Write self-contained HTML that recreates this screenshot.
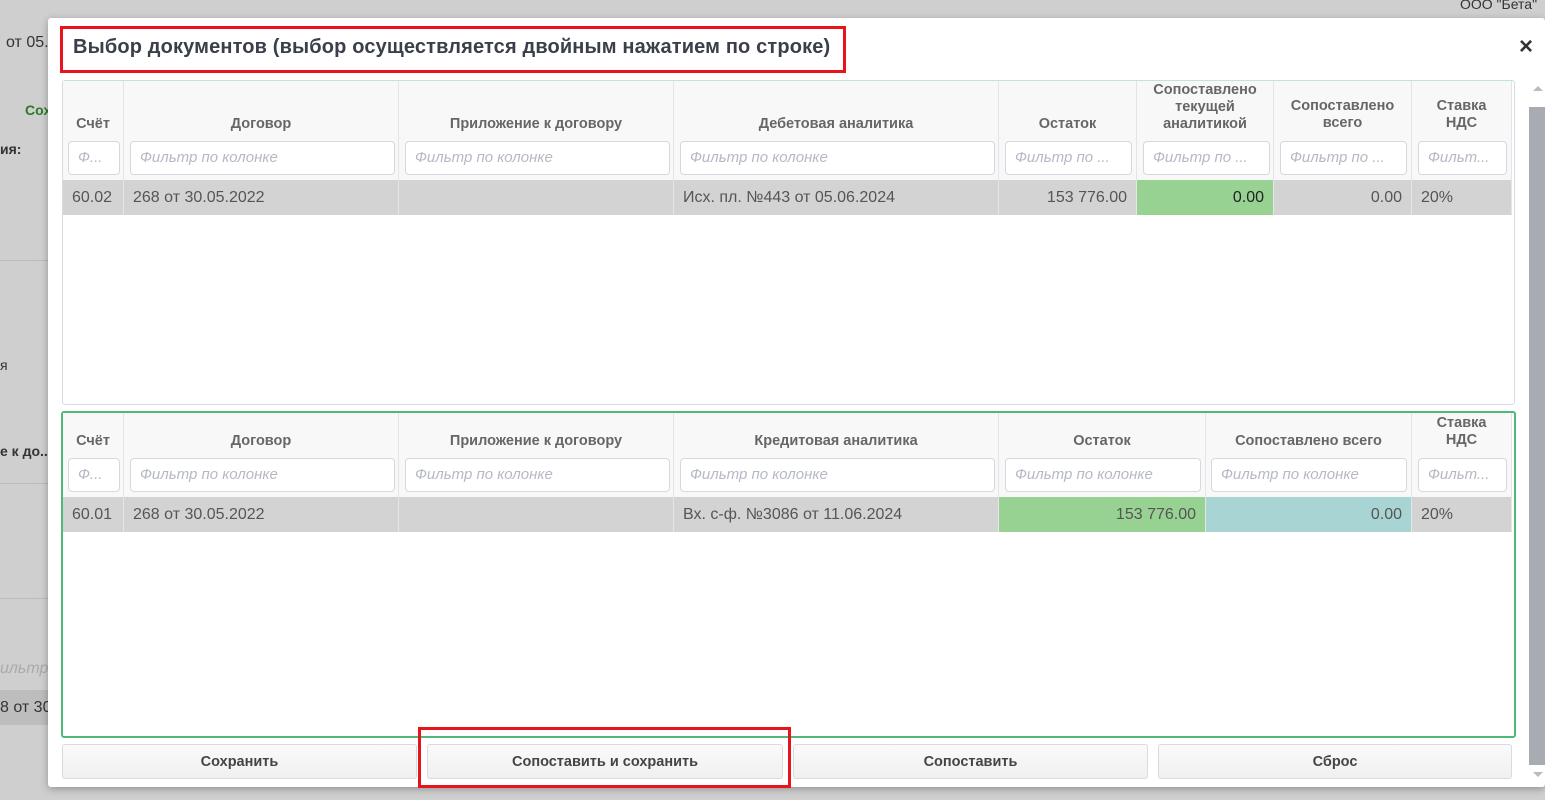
<!DOCTYPE html>
<html><head><meta charset="utf-8"><style>
*{box-sizing:border-box;margin:0;padding:0}
body{width:1545px;height:800px;overflow:hidden;background:#cfcfcf;font-family:"Liberation Sans","DejaVu Sans",sans-serif;position:relative}
.a{position:absolute}
.bgt{color:#333;font-size:14px}
.modal{left:48px;top:18px;width:1497px;height:769px;background:#fff;box-shadow:0 2px 8px rgba(0,0,0,.3);border-radius:3px}
.tbl{position:absolute;border:1px solid #d8dbe3;border-radius:3px;background:#fff}
.hd{position:absolute;background:#f8f8f9;border-right:1px solid #e3e4e8;color:#666;font-size:14.5px;font-weight:bold;text-align:center;display:flex;align-items:flex-start;justify-content:center;line-height:17px}
.f{position:absolute;border:1px solid #d6d8e0;border-radius:4px;background:#fff;color:#b5b9c4;font-style:italic;font-size:15px;padding:7px 9px;white-space:nowrap;overflow:hidden;text-overflow:ellipsis;height:34px}
.c{position:absolute;background:#d3d3d3;border-right:1px solid #e6e6e6;color:#555;font-size:16px;line-height:35px;height:35px;padding:0 9px;white-space:nowrap}
.r{text-align:right}
.btn{position:absolute;top:744px;height:35px;border:1px solid #d8dbe3;border-radius:3px;background:linear-gradient(#fafafa,#f0f0f0);font-size:14.5px;font-weight:bold;color:#444;text-align:center;line-height:34px}
.red{position:absolute;border:3px solid #e8141c}
</style></head><body>
<div class="a bgt" style="left:6px;top:34px;font-size:16px">от 05.</div>
<div class="a" style="left:25px;top:102px;font-size:14px;color:#2a7a2a;font-weight:bold">Сох</div>
<div class="a bgt" style="left:0;top:141px;font-weight:bold">ия:</div>
<div class="a bgt" style="left:0;top:357px">я</div>
<div class="a bgt" style="left:0;top:443px;font-weight:bold;white-space:nowrap">е к до...</div>
<div class="a" style="left:0;top:660px;font-style:italic;color:#aaa;font-size:16px">ильтр</div>
<div class="a" style="left:0;top:690px;width:48px;height:35px;background:#bdbdbd;font-size:16px;line-height:35px;color:#333;white-space:nowrap;overflow:hidden">8 от 30</div>
<div class="a" style="left:0;top:260px;width:48px;height:1px;background:#bbb"></div>
<div class="a" style="left:0;top:483px;width:48px;height:1px;background:#bbb"></div>
<div class="a" style="left:0;top:598px;width:48px;height:1px;background:#bbb"></div>
<div class="a" style="left:1460px;top:-4px;font-size:14px;color:#333">ООО "Бета"</div>

<div class="a modal"></div>
<div class="a" style="left:73px;top:36px;font-size:20px;font-weight:bold;color:#3a3f4a;letter-spacing:0.15px">Выбор документов (выбор осуществляется двойным нажатием по строке)</div>
<div class="red" style="left:60px;top:26px;width:786px;height:47px"></div>
<div class="a" style="left:1519px;top:33px;font-size:24px;font-weight:bold;color:#333">×</div>
<div class="a" style="left:1529px;top:107px;width:16px;height:658px;background:#a9abb2"></div>
<div class="a" style="left:1533px;top:86px;width:0;height:0;border:5px solid transparent;border-bottom-color:#bbb;border-top:0"></div>
<div class="a" style="left:1533px;top:772px;width:0;height:0;border:5px solid transparent;border-top-color:#bbb;border-bottom:0"></div>

<!-- top table -->
<div class="tbl" style="left:62px;top:80px;width:1453px;height:325px;border-top-color:#bfe6d0"></div>
<div class="hd" style="left:63px;top:81px;width:61px;height:99px;padding-top:35px">Счёт</div>
<div class="hd" style="left:124px;top:81px;width:275px;height:99px;padding-top:35px">Договор</div>
<div class="hd" style="left:399px;top:81px;width:275px;height:99px;padding-top:35px">Приложение к договору</div>
<div class="hd" style="left:674px;top:81px;width:325px;height:99px;padding-top:35px">Дебетовая аналитика</div>
<div class="hd" style="left:999px;top:81px;width:138px;height:99px;padding-top:35px">Остаток</div>
<div class="hd" style="left:1137px;top:81px;width:137px;height:99px;padding-top:1px">Сопоставлено<br>текущей<br>аналитикой</div>
<div class="hd" style="left:1274px;top:81px;width:138px;height:99px;padding-top:17px">Сопоставлено<br>всего</div>
<div class="hd" style="left:1412px;top:81px;width:100px;height:99px;padding-top:17px">Ставка<br>НДС</div>
<div class="f" style="left:68px;top:141px;width:52px">Ф...</div>
<div class="f" style="left:130px;top:141px;width:265px">Фильтр по колонке</div>
<div class="f" style="left:405px;top:141px;width:265px">Фильтр по колонке</div>
<div class="f" style="left:680px;top:141px;width:315px">Фильтр по колонке</div>
<div class="f" style="left:1005px;top:141px;width:127px">Фильтр по ...</div>
<div class="f" style="left:1143px;top:141px;width:127px">Фильтр по ...</div>
<div class="f" style="left:1280px;top:141px;width:127px">Фильтр по ...</div>
<div class="f" style="left:1418px;top:141px;width:89px">Фильт...</div>
<div class="c" style="left:63px;top:180px;width:61px">60.02</div>
<div class="c" style="left:124px;top:180px;width:275px">268 от 30.05.2022</div>
<div class="c" style="left:399px;top:180px;width:275px"></div>
<div class="c" style="left:674px;top:180px;width:325px">Исх. пл. №443 от 05.06.2024</div>
<div class="c r" style="left:999px;top:180px;width:138px">153 776.00</div>
<div class="c r" style="left:1137px;top:180px;width:137px;background:#98d292;color:#222">0.00</div>
<div class="c r" style="left:1274px;top:180px;width:138px">0.00</div>
<div class="c" style="left:1412px;top:180px;width:100px">20%</div>

<!-- bottom table -->
<div class="tbl" style="left:61px;top:411px;width:1455px;height:327px;border:2px solid #4fb97a"></div>
<div class="hd" style="left:63px;top:413px;width:61px;height:84px;padding-top:20px">Счёт</div>
<div class="hd" style="left:124px;top:413px;width:275px;height:84px;padding-top:20px">Договор</div>
<div class="hd" style="left:399px;top:413px;width:275px;height:84px;padding-top:20px">Приложение к договору</div>
<div class="hd" style="left:674px;top:413px;width:325px;height:84px;padding-top:20px">Кредитовая аналитика</div>
<div class="hd" style="left:999px;top:413px;width:207px;height:84px;padding-top:20px">Остаток</div>
<div class="hd" style="left:1206px;top:413px;width:206px;height:84px;padding-top:20px">Сопоставлено всего</div>
<div class="hd" style="left:1412px;top:413px;width:100px;height:84px;padding-top:2px">Ставка<br>НДС</div>
<div class="f" style="left:68px;top:458px;width:52px">Ф...</div>
<div class="f" style="left:130px;top:458px;width:265px">Фильтр по колонке</div>
<div class="f" style="left:405px;top:458px;width:265px">Фильтр по колонке</div>
<div class="f" style="left:680px;top:458px;width:315px">Фильтр по колонке</div>
<div class="f" style="left:1005px;top:458px;width:196px">Фильтр по колонке</div>
<div class="f" style="left:1211px;top:458px;width:196px">Фильтр по колонке</div>
<div class="f" style="left:1418px;top:458px;width:89px">Фильт...</div>
<div class="c" style="left:63px;top:497px;width:61px">60.01</div>
<div class="c" style="left:124px;top:497px;width:275px">268 от 30.05.2022</div>
<div class="c" style="left:399px;top:497px;width:275px"></div>
<div class="c" style="left:674px;top:497px;width:325px">Вх. с-ф. №3086 от 11.06.2024</div>
<div class="c r" style="left:999px;top:497px;width:207px;background:#98d292">153 776.00</div>
<div class="c r" style="left:1206px;top:497px;width:206px;background:#a8d5d3">0.00</div>
<div class="c" style="left:1412px;top:497px;width:100px">20%</div>

<div class="btn" style="left:62px;width:355px">Сохранить</div>
<div class="btn" style="left:427px;width:356px">Сопоставить и сохранить</div>
<div class="btn" style="left:793px;width:355px">Сопоставить</div>
<div class="btn" style="left:1158px;width:354px">Сброс</div>
<div class="red" style="left:418px;top:727px;width:373px;height:61px"></div>
</body></html>
